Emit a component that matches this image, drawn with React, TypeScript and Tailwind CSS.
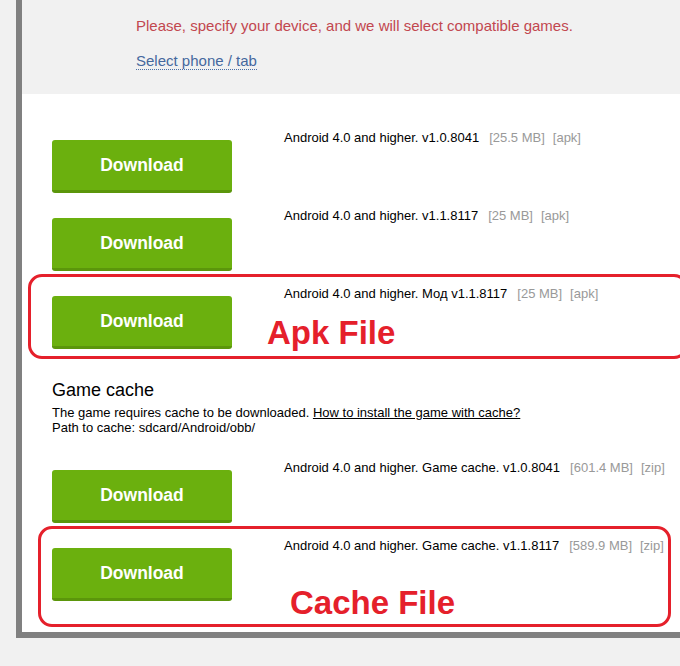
const apkRows = [
  { name: 'Android 4.0 and higher. v1.0.8041', size: '[25.5 MB]', ext: '[apk]' },
  { name: 'Android 4.0 and higher. v1.1.8117', size: '[25 MB]', ext: '[apk]' },
  { name: 'Android 4.0 and higher. Мод v1.1.8117', size: '[25 MB]', ext: '[apk]' },
]
const cacheRows = [
  { name: 'Android 4.0 and higher. Game cache. v1.0.8041', size: '[601.4 MB]', ext: '[zip]' },
  { name: 'Android 4.0 and higher. Game cache. v1.1.8117', size: '[589.9 MB]', ext: '[zip]' },
]

type Row = { name: string; size: string; ext: string }

function DownloadRow({ row }: { row: Row }) {
  return (
    <div className="relative flex h-[78px] pl-[30px]">
      <a
        href="#"
        className="mt-[12px] flex h-[53px] w-[180px] items-center justify-center rounded-[3px] border-b-[3px] border-[#5b960b] bg-[#6bb00e] text-[17.5px] font-bold text-white"
      >
        Download
      </a>
      <div className="ml-[52px] mt-[2px] text-[13px] leading-[16px] text-black whitespace-nowrap">
        {row.name}
        <span className="ml-[10px] text-[#999]">{row.size}</span>
        <span className="ml-[8px] text-[#999]">{row.ext}</span>
      </div>
    </div>
  )
}

export default function App() {
  return (
    <div className="min-h-[666px] bg-[#f1f1f1] pl-[16px] font-['Liberation_Sans',Arial,sans-serif]">
      <div className="relative border-b-[6px] border-l-[6px] border-[#808080] bg-white">
        <div className="h-[94px] bg-[#f1f1f1] pl-[114px] pt-[17px]">
          <p className="text-[15px] leading-[18px] text-[#c2474f]">
            Please, specify your device, and we will select compatible games.
          </p>
          <a
            href="#"
            className="mt-[17px] inline-block border-b border-dotted border-[#4a6fa5] text-[15px] leading-[17px] text-[#45689e]"
          >
            Select phone / tab
          </a>
        </div>

        <div className="pt-[34px] pb-[18px]">
          {apkRows.map((r) => (
            <DownloadRow key={r.name} row={r} />
          ))}

          <div className="pl-[30px] pt-[18px] pb-[23px]">
            <h3 className="text-[18px] leading-[21px] text-black">Game cache</h3>
            <p className="mt-[4px] text-[13px] leading-[15px] text-black">
              The game requires cache to be downloaded.{' '}
              <a href="#" className="underline">How to install the game with cache?</a>
              <br />
              Path to cache: sdcard/Android/obb/
            </p>
          </div>

          {cacheRows.map((r) => (
            <DownloadRow key={r.name} row={r} />
          ))}
        </div>

        {/* annotations */}
        <div className="pointer-events-none absolute left-[6px] top-[274px] h-[85px] w-[660px] rounded-[14px] border-[3px] border-[#e5202b]" />
        <div className="pointer-events-none absolute left-[245px] top-[316px] text-[33px] font-bold leading-[33px] text-[#e5202b]">
          Apk File
        </div>
        <div className="pointer-events-none absolute left-[16px] top-[526px] h-[101px] w-[633px] rounded-[14px] border-[3px] border-[#e5202b]" />
        <div className="pointer-events-none absolute left-[268px] top-[586px] text-[33px] font-bold leading-[33px] text-[#e5202b]">
          Cache File
        </div>
      </div>
    </div>
  )
}
